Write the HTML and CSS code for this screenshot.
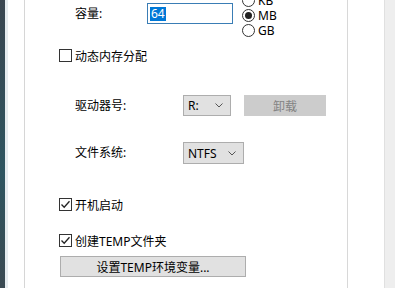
FILE: index.html
```html
<!DOCTYPE html>
<html lang="zh-CN">

<head>
	<meta charset="UTF-8">
	<meta name="viewport" content="width=device-width, initial-scale=1.0">
	<title>内存盘设置</title>
	<link rel="stylesheet" href="styles.css">
</head>

<body>
	<div class="window">
		<div class="desktop"></div>
		<div class="gap"></div>
		<div class="page">
			<div class="form">
				<div class="row sizeRow">
					<label class="label sizeLabel" for="size">容量:</label>
					<div class="input" id="size"><span class="selected">64</span></div>
					<div class="radios">
						<div class="radio"><span class="dot"></span>KB</div>
						<div class="radio"><span class="dot on"></span>MB</div>
						<div class="radio"><span class="dot"></span>GB</div>
					</div>
				</div>

				<div class="row checkRow dynRow">
					<span class="box"></span>动态内存分配
				</div>

				<div class="row driveRow">
					<span class="label wideLabel">驱动器号:</span>
					<div class="select driveSelect">R:
						<svg class="chev" width="8" height="5" viewBox="0 0 8 5"><path d="M0.5 0.5 L4 4 L7.5 0.5" fill="none" stroke="#555" stroke-width="1"/></svg>
					</div>
					<button class="unmount" disabled>卸载</button>
				</div>

				<div class="row fsRow">
					<span class="label wideLabel">文件系统:</span>
					<div class="select fsSelect">NTFS
						<svg class="chev" width="8" height="5" viewBox="0 0 8 5"><path d="M0.5 0.5 L4 4 L7.5 0.5" fill="none" stroke="#555" stroke-width="1"/></svg>
					</div>
				</div>

				<div class="row checkRow bootRow">
					<span class="box">
						<svg width="11" height="11" viewBox="0 0 11 11"><path d="M1.5 5.5 L4.2 8.3 L9.5 2.2" fill="none" stroke="#222" stroke-width="1.3"/></svg>
					</span>开机启动
				</div>

				<div class="row checkRow tempRow">
					<span class="box">
						<svg width="11" height="11" viewBox="0 0 11 11"><path d="M1.5 5.5 L4.2 8.3 L9.5 2.2" fill="none" stroke="#222" stroke-width="1.3"/></svg>
					</span>创建TEMP文件夹
				</div>

				<div class="row btnRow">
					<button class="setEnv">设置TEMP环境变量...</button>
				</div>
			</div>
		</div>
		<div class="after"></div>
		<div class="side"></div>
		<div class="edge"></div>
	</div>
</body>

</html>
```

FILE: styles.css
```css
body,
html {
	margin: 0;
	padding: 0;
	height: 100%;
	overflow: hidden;
	background: #fff;
}

body {
	font-family: "Noto Sans", "Noto Sans CJK SC", sans-serif;
	font-size: 12px;
	color: #000;
}

.window {
	display: flex;
	height: 288px;
}

.desktop {
	flex: 0 0 5px;
	background: linear-gradient(180deg, #3a4650, #2e5560 60%, #3b4a52);
	border-right: 3px solid #e6ecef;
}

.gap {
	flex: 0 0 16px;
	border-right: 1px solid #d6d6d6;
}

.page {
	flex: 0 0 322px;
	border-right: 1px solid #d8d8d8;
}

.after {
	flex: 0 0 36px;
}

.side {
	flex: 0 0 10px;
	background: #eeeeee;
	border-left: 1px solid #e0e0e0;
}

.edge {
	flex: 1;
	background: #1e2538;
}

.form {
	display: flex;
	flex-direction: column;
	margin-top: -7px;
}

.row {
	display: flex;
	align-items: center;
}

.label {
	margin-left: 50px;
	line-height: 16px;
}

.sizeRow {
	height: 45px;
}

.sizeLabel {
	width: 72px;
	margin-bottom: 3px;
}

.wideLabel {
	width: 108px;
}

.input {
	width: 82px;
	height: 19px;
	border: 1px solid #3a7db5;
	margin-bottom: 4px;
	display: flex;
	align-items: center;
	padding-left: 2px;
}

.selected {
	background: #0078d7;
	color: #fff;
	line-height: 14px;
	padding: 0 1px;
}

.radios {
	margin-left: 9px;
	display: flex;
	flex-direction: column;
}

.radio {
	height: 15px;
	line-height: 13px;
	display: flex;
	align-items: center;
}

.dot {
	width: 11px;
	height: 11px;
	border: 1px solid #333;
	border-radius: 50%;
	margin-right: 3px;
	display: flex;
	align-items: center;
	justify-content: center;
}

.dot.on::after {
	content: "";
	width: 7px;
	height: 7px;
	border-radius: 50%;
	background: #222;
}

.checkRow {
	margin-left: 34px;
	height: 13px;
}

.box {
	width: 11px;
	height: 11px;
	border: 1px solid #333;
	margin-right: 3px;
	display: flex;
}

.dynRow {
	margin-top: 11px;
	margin-bottom: 10px;
}

.driveRow {
	margin-top: 23px;
	height: 21px;
}

.select {
	height: 19px;
	background: #e1e1e1;
	border: 1px solid #adadad;
	display: flex;
	align-items: center;
	justify-content: space-between;
	padding: 0 7px 0 4px;
	box-sizing: content-box;
}

.driveSelect {
	width: 35px;
}

.fsSelect {
	width: 48px;
	height: 20px;
}

.unmount {
	margin-left: 13px;
	width: 82px;
	height: 21px;
	border: none;
	background: #cccccc;
	color: #838383;
	font: inherit;
	padding: 0;
}

.fsRow {
	margin-top: 26px;
	height: 22px;
}

.bootRow {
	margin-top: 34px;
}

.tempRow {
	margin-top: 23px;
}

.btnRow {
	margin-top: 9px;
	margin-left: 35px;
}

.setEnv {
	width: 186px;
	height: 21px;
	background: #e1e1e1;
	border: 1px solid #adadad;
	font: inherit;
	color: #000;
	padding: 0;
}
```
